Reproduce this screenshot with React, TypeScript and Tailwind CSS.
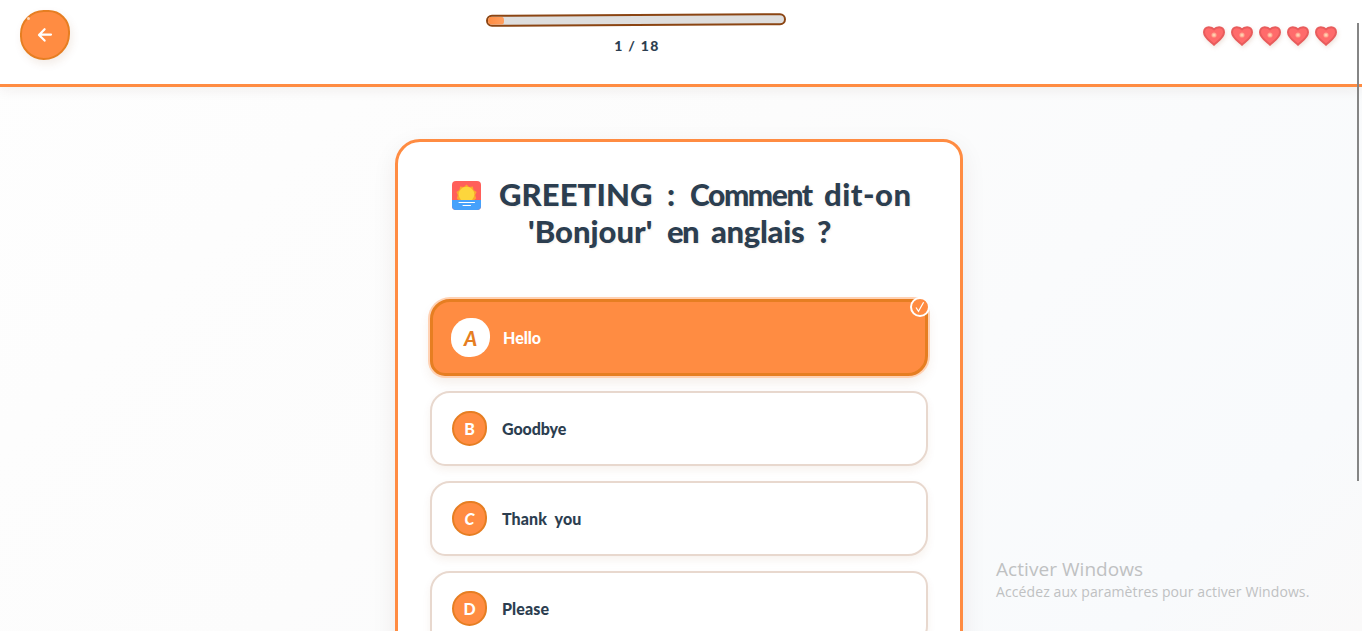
import React from "react";

const HEARTS = [0, 1, 2, 3, 4];

const OPTIONS = [
  { letter: "B", label: "Goodbye", style: "tracking-[-0.1px]", badge: "" },
  { letter: "C", label: "Thank you", style: "tracking-[0.1px] [word-spacing:4px]", badge: "italic" },
  { letter: "D", label: "Please", style: "tracking-[0.1px]", badge: "" },
];

function Heart() {
  return (
    <svg className="h-[22px] w-6 drop-shadow-[1px_2px_2px_rgba(139,69,19,0.15)]" viewBox="0 0 24 22">
      <path
        d="M12 19.800 C9.600 17.200 2 12.800 2 7.200 C2 4 4.200 2.200 6.800 2.200 C9 2.200 10.900 3 12 4.400 C13.100 3 15 2.200 17.200 2.200 C19.800 2.200 22 4 22 7.200 C22 12.800 14.400 17.200 12 19.800 Z"
        fill="#ff6b6b"
        stroke="#e85c5c"
        strokeWidth="2"
        strokeLinejoin="round"
      />
      <circle cx="12" cy="10" r="2.600" fill="#ffa08c" />
      <circle cx="12" cy="10" r="1.600" fill="#ffd0b0" />
    </svg>
  );
}

function Sunrise() {
  return (
    <svg className="relative top-px size-[29px] shrink-0" viewBox="0 0 29 29">
      <defs>
        <clipPath id="tile">
          <rect width="29" height="29" rx="4" />
        </clipPath>
      </defs>
      <g clipPath="url(#tile)">
        <rect width="29" height="29" fill="#ff5f5a" />
        <path
          d="M14.500 3.600 L17.200 6 L20.800 5.600 L21.600 9 L24.600 11 L23.200 14 L24.200 17.400 L21 20 H8 L4.800 17.400 L5.800 14 L4.400 11 L7.400 9 L8.200 5.600 L11.800 6 Z"
          fill="#fba62f"
        />
        <circle cx="14.500" cy="13.500" r="7.800" fill="#fdd63c" />
        <rect y="19" width="29" height="10" fill="#46a1fb" />
        <path d="M7 21.500 H22.500 M11 24.500 H18.500" stroke="#fff" strokeWidth="1" strokeLinecap="round" />
      </g>
    </svg>
  );
}

function Header() {
  return (
    <header className="grid h-[87px] grid-cols-[1fr_300px_1fr] items-start border-b-[3px] border-[#ff8c42] bg-white shadow-[0_4px_12px_rgba(60,40,20,0.06)]">
      <div className="pt-2.5 pl-5">
        <button className="relative flex size-[50px] items-center justify-center rounded-[50%_45%_55%_50%] border-2 border-[#e67e22] bg-[#ff8c42] shadow-[2px_4px_8px_rgba(139,69,19,0.1)]">
          <svg className="size-4" viewBox="0 0 16 16" fill="none" stroke="#fff" strokeWidth="2.200" strokeLinecap="round" strokeLinejoin="round">
            <path d="M14 7.600 H2.300 M7.600 2.200 L2 7.900 L7.600 13.600" />
          </svg>
          <span className="absolute top-[5px] left-[5px] size-[3px] rounded-full bg-[#ffd3b3]" />
        </button>
      </div>
      <div className="relative -left-[45px] pt-3.5">
        <div className="h-[12px] w-[300px] -rotate-[0.3deg] overflow-hidden rounded-[10px] border-2 border-[#8b4513] bg-[#dedede]">
          <div className="h-full w-4 rounded-r-[3px] bg-linear-to-r from-[#ff8c42] to-[#ff9f5f]" />
        </div>
        <div className="relative left-[1px] mt-2.5 text-center text-[14px] leading-5 font-black tracking-[1.3px] text-[#2c3e50]">
          1 / 18
        </div>
      </div>
      <div className="flex justify-end gap-1 pt-[25px] pr-6">
        {HEARTS.map((i) => (
          <Heart key={i} />
        ))}
      </div>
    </header>
  );
}

function Question() {
  return (
    <h1 className="text-[31px] leading-[37px] font-black whitespace-nowrap text-[#2c3e50] [text-shadow:1px_1px_2px_rgba(139,69,19,0.1)]">
      <span className="flex items-center pl-[54px]">
        <Sunrise />
        <span className="ml-[18px] w-[168px] tracking-[0.1px]">GREETING </span>
        <span className="w-[23px]">: </span>
        <span className="w-[134px] text-[30px] tracking-[-1.4px]">Comment </span>
        <span className="tracking-[0.5px]">dit-on</span>
      </span>
      <span className="flex items-center pl-[130px]">
        <span className="w-[139px] tracking-[0px]">'Bonjour' </span>
        <span className="w-[44px] tracking-[-1.500px]">en </span>
        <span className="w-[106px] tracking-[-0.300px]">anglais </span>
        <span>?</span>
      </span>
    </h1>
  );
}

export default function App() {
  return (
    <div className="relative h-[631px] w-full overflow-hidden bg-[linear-gradient(135deg,#fefefe_0%,#fcfcfc_45%,#f8fafc_88%,#faf9f9_100%)] font-['Comic_Sans_MS','Lato',sans-serif]">
      <Header />
      <main className="flex pt-[52px] pl-[395px]">
        <section className="h-[620px] w-[568px] shrink-0 rounded-[25px_20px_30px_15px] border-[3px] border-[#ff8c42] bg-white shadow-[0_8px_25px_rgba(60,40,20,0.08)]">
          <div className="pt-[34px]">
            <Question />
          </div>
          <div className="mt-[49px] ml-8 flex w-[498px] flex-col gap-[15px]">
            <div className="relative flex h-[77px] items-center rounded-[20px_15px_20px_15px] border-[3px] border-[#e67e22] bg-[#ff8c42] pl-[18px] shadow-[0_0_0_2px_#ffd1b3,0_6px_12px_rgba(139,69,19,0.1)]">
              <span className="flex size-[39px] items-center justify-center rounded-[50%_45%_50%_45%] bg-white text-[20px] font-black text-[#e67e22] italic">
                A
              </span>
              <span className="ml-[13px] text-[16px] font-black text-white">Hello</span>
              <span className="absolute -top-[5px] -right-[5px] flex size-5 items-center justify-center rounded-full border-2 border-white bg-[#ff8c42]">
                <svg className="size-3" viewBox="0 0 12 12" fill="none" stroke="#fff" strokeWidth="1.200">
                  <path d="M2 6.500 L4.500 10.300 L9.600 1.200" />
                </svg>
              </span>
            </div>
            {OPTIONS.map((o) => (
              <div
                key={o.letter}
                className="flex h-[75px] items-center rounded-[20px_15px_20px_15px] border-2 border-[#e8d8ce] bg-white pl-5 shadow-[0_4px_8px_rgba(139,69,19,0.07)]"
              >
                <span className={"flex size-[35px] items-center justify-center rounded-[50%_45%_50%_50%] border-2 border-[#e67e22] bg-[#ff8c42] text-[16px] font-black text-white " + o.badge}>
                  {o.letter}
                </span>
                <span className={"ml-[15px] text-[16px] font-black text-[#2c3e50] " + o.style}>{o.label}</span>
              </div>
            ))}
          </div>
        </section>
      </main>
      <div className="absolute top-[557px] left-[996px] font-['Segoe_UI','Open_Sans',sans-serif] whitespace-nowrap text-[#bfc1c2]">
        <div className="text-[19px] leading-6 tracking-[0.05px]">Activer Windows</div>
        <div className="text-[14px] leading-[22px] tracking-[0.1px]">Accédez aux paramètres pour activer Windows.</div>
      </div>
      <div className="absolute top-[23px] right-[3px] h-[458px] w-0.5 bg-[#858585]" />
    </div>
  );
}
